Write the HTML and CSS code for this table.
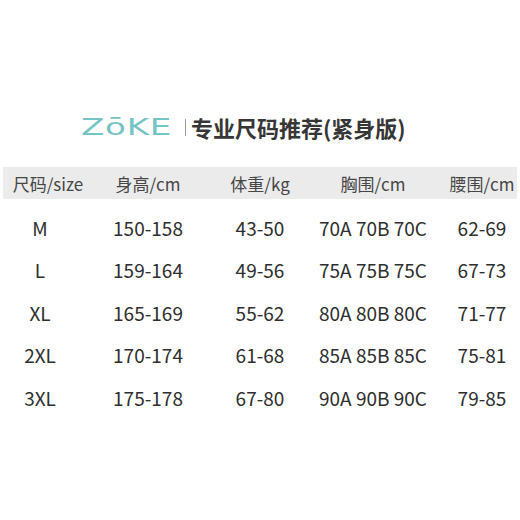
FILE: index.html
```html
<!DOCTYPE html>
<html lang="zh-CN">
<head>
<meta charset="utf-8">
<link rel="stylesheet" href="styles.css">
</head>
<body>
<div class="page">
  <div class="title-row">
    <span class="logo">ZōKE</span>
    <span class="sep"></span>
    <span class="title">专业尺码推荐(紧身版)</span>
  </div>
  <div class="table">
    <div class="row head">
      <div class="c c1">尺码/size</div>
      <div class="c c2">身高/cm</div>
      <div class="c c3">体重/kg</div>
      <div class="c c4">胸围/cm</div>
      <div class="c c5">腰围/cm</div>
    </div>
    <div class="row">
      <div class="c c1">M</div>
      <div class="c c2">150-158</div>
      <div class="c c3">43-50</div>
      <div class="c c4">70A 70B 70C</div>
      <div class="c c5">62-69</div>
    </div>
    <div class="row">
      <div class="c c1">L</div>
      <div class="c c2">159-164</div>
      <div class="c c3">49-56</div>
      <div class="c c4">75A 75B 75C</div>
      <div class="c c5">67-73</div>
    </div>
    <div class="row">
      <div class="c c1">XL</div>
      <div class="c c2">165-169</div>
      <div class="c c3">55-62</div>
      <div class="c c4">80A 80B 80C</div>
      <div class="c c5">71-77</div>
    </div>
    <div class="row">
      <div class="c c1">2XL</div>
      <div class="c c2">170-174</div>
      <div class="c c3">61-68</div>
      <div class="c c4">85A 85B 85C</div>
      <div class="c c5">75-81</div>
    </div>
    <div class="row">
      <div class="c c1">3XL</div>
      <div class="c c2">175-178</div>
      <div class="c c3">67-80</div>
      <div class="c c4">90A 90B 90C</div>
      <div class="c c5">79-85</div>
    </div>
  </div>
</div>
</body>
</html>
```
FILE: styles.css
```css
* { box-sizing: border-box; }
html, body { margin: 0; padding: 0; background: #fff; }
body {
  width: 520px;
  height: 520px;
  overflow: hidden;
  font-family: "Noto Sans CJK SC", "Noto Sans", sans-serif;
}
.page {
  padding: 111px 3px 0 3px;
}
.title-row {
  display: flex;
  align-items: center;
  height: 32px;
  padding-left: 78px;
}
.logo {
  display: inline-block;
  font-family: "DejaVu Sans", sans-serif;
  font-weight: 400;
  font-size: 23px;
  color: #76c4c4;
  letter-spacing: 0.5px;
  transform: scaleX(1.48);
  transform-origin: left center;
  width: 104px;
  line-height: 1;
}
.sep {
  width: 1px;
  height: 17px;
  background: #9a9a9a;
  margin-left: 0;
  margin-right: 5px;
}
.title {
  font-size: 22px;
  font-weight: 700;
  color: #363636;
  line-height: 1;
}
.table {
  margin-top: 24px;
}
.row {
  display: grid;
  grid-template-columns: 84px 122px 102px 124px 82px;
  height: 42.5px;
  align-items: center;
  font-size: 19px;
  font-weight: 400;
  color: #2e2e2e;
}
.row.head {
  height: 32px;
  background: #ebebeb;
  font-size: 17px;
  color: #464646;
  margin-bottom: 7px;
}
.c {
  text-align: center;
  white-space: nowrap;
  line-height: 1;
}
.c1 { padding-right: 10px; }
.head .c1 { padding-right: 0; padding-left: 6px; }
.c5 { padding-left: 12px; }
```
